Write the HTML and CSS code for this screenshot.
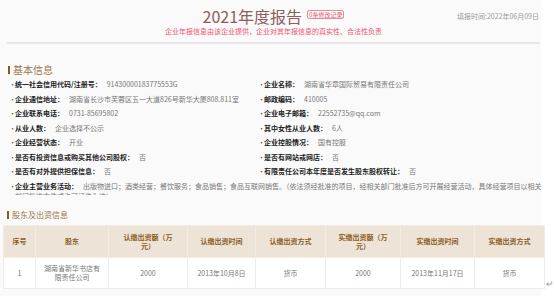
FILE: index.html
```html
<!DOCTYPE html>
<html lang="zh-CN">
<head>
<meta charset="utf-8">
<title>2021年度报告</title>
<link rel="stylesheet" href="styles.css">
</head>
<body>
<div class="page">
  <header class="head">
    <div class="head-side"></div>
    <div class="head-center">
      <div class="title-line">
        <h1 class="title">2021年度报告</h1>
        <span class="badge">0条修改记录</span>
      </div>
      <p class="notice">企业年报信息由该企业提供，企业对其年报信息的真实性、合法性负责</p>
    </div>
    <div class="head-side head-date">填报时间:2022年06月09日</div>
  </header>
  <div class="rule"></div>

  <h2 class="sec-title sec-big"><span class="sec-bar"></span>基本信息</h2>
  <div class="info">
    <div class="item"><span class="dot">·</span><b class="lbl">统一社会信用代码/注册号：</b><span class="val">91430000183775553G</span></div>
    <div class="item"><span class="dot">·</span><b class="lbl">企业名称：</b><span class="val">湖南省华章国际贸易有限责任公司</span></div>
    <div class="item"><span class="dot">·</span><b class="lbl">企业通信地址：</b><span class="val">湖南省长沙市芙蓉区五一大道826号新华大厦808.811室</span></div>
    <div class="item"><span class="dot">·</span><b class="lbl">邮政编码：</b><span class="val">410005</span></div>
    <div class="item"><span class="dot">·</span><b class="lbl">企业联系电话：</b><span class="val">0731-85695802</span></div>
    <div class="item"><span class="dot">·</span><b class="lbl">企业电子邮箱：</b><span class="val">22552735@qq.com</span></div>
    <div class="item"><span class="dot">·</span><b class="lbl">从业人数：</b><span class="val">企业选择不公示</span></div>
    <div class="item"><span class="dot">·</span><b class="lbl">其中女性从业人数：</b><span class="val">6人</span></div>
    <div class="item"><span class="dot">·</span><b class="lbl">企业经营状态：</b><span class="val">开业</span></div>
    <div class="item"><span class="dot">·</span><b class="lbl">企业控股情况：</b><span class="val">国有控股</span></div>
    <div class="item"><span class="dot">·</span><b class="lbl">是否有投资信息或购买其他公司股权：</b><span class="val">否</span></div>
    <div class="item"><span class="dot">·</span><b class="lbl">是否有网站或网店：</b><span class="val">否</span></div>
    <div class="item"><span class="dot">·</span><b class="lbl">是否有对外提供担保信息：</b><span class="val">否</span></div>
    <div class="item"><span class="dot">·</span><b class="lbl">有限责任公司本年度是否发生股东股权转让：</b><span class="val">否</span></div>
    <div class="item item-wide"><span class="dot">·</span><p class="wide-text"><b class="lbl">企业主营业务活动：</b><span class="val">出版物进口；酒类经营；餐饮服务；食品销售；食品互联网销售。（依法须经批准的项目，经相关部门批准后方可开展经营活动，具体经营项目以相关部门批准文件或许可证件为准）</span></p></div>
  </div>

  <h2 class="sec-title sec-small"><span class="sec-bar"></span>股东及出资信息</h2>
  <div class="table-row">
    <table class="grid">
      <colgroup>
        <col class="c1"><col class="c2"><col class="c3"><col class="c4">
        <col class="c5"><col class="c6"><col class="c7"><col class="c8">
      </colgroup>
      <thead>
        <tr>
          <th>序号</th><th>股东</th><th class="wrap">认缴出资额（万元）</th><th>认缴出资时间</th>
          <th>认缴出资方式</th><th class="wrap">实缴出资额（万元）</th><th>实缴出资时间</th><th>实缴出资方式</th>
        </tr>
      </thead>
      <tbody>
        <tr>
          <td>1</td><td class="name">湖南省新华书店有限责任公司</td><td>2000</td><td>2013年10月8日</td>
          <td>货币</td><td>2000</td><td>2013年11月17日</td><td>货币</td>
        </tr>
      </tbody>
    </table>
    <span class="para">↵</span>
  </div>
</div>
</body>
</html>
```

FILE: styles.css
```css
* { box-sizing: border-box; }
html, body { margin: 0; padding: 0; }
body {
  background: #ffffff;
  font-family: "Noto Sans CJK SC", "Noto Sans", sans-serif;
  color: #333;
}
.page {
  width: 554px;
  height: 296px;
  overflow: hidden;
  background: linear-gradient(to right, #fafafa 0, #fafafa 541px, #ffffff 541px);
}
.head {
  display: grid;
  grid-template-columns: 1fr auto 1fr;
  width: 554px;
  padding: 6px 15px 0 8px;
}
.head-center { text-align: center; }
.title-line {
  display: flex;
  align-items: center;
  justify-content: center;
  gap: 5px;
  height: 20px;
}
.title {
  margin: 0;
  font-size: 16px;
  font-weight: normal;
  line-height: 20px;
  color: #8e5d5d;
}
.badge {
  font-size: 6px;
  line-height: 7px;
  color: #e05a70;
  border: 1px solid #e88a99;
  border-radius: 2px;
  padding: 0 1px;
  margin-top: -3px;
}
.notice {
  margin: 0;
  font-size: 7px;
  line-height: 10px;
  color: #ee5472;
  white-space: nowrap;
}
.head-date {
  justify-self: end;
  font-size: 7px;
  line-height: 20px;
  color: #9a9a9a;
  white-space: nowrap;
}
.rule {
  height: 2px;
  background: #e8e8e8;
  margin: 6px 14px 0 7px;
}
.sec-title {
  display: flex;
  align-items: center;
  margin: 0;
  font-weight: normal;
  color: #9a7548;
  line-height: 12px;
}
.sec-big { font-size: 10px; margin-top: 20px; padding-left: 8px; }
.sec-small { font-size: 8px; margin-top: 14px; padding-left: 7px; }
.sec-bar {
  width: 2px;
  height: 8px;
  background: #8a5a22;
  margin-right: 3px;
}
.info {
  display: grid;
  grid-template-columns: 249px 290px;
  grid-auto-rows: 10px;
  row-gap: 4.57px;
  margin-top: 3px;
  padding-left: 9px;
  height: 116px;
  overflow: hidden;
  font-size: 7px;
  line-height: 10px;
}
.item {
  display: flex;
  white-space: nowrap;
}
.item-wide {
  grid-column: 1 / 3;
  grid-row: span 2;
  white-space: normal;
}
.dot {
  width: 6px;
  flex: none;
  color: #555;
}
.lbl {
  font-weight: bold;
  color: #222;
}
.val {
  color: #777;
  margin-left: 5px;
}
.wide-text {
  margin: 0;
  width: 533px;
}
.table-row {
  display: flex;
  align-items: flex-end;
  margin-top: 4px;
  padding-left: 3px;
}
.grid {
  border-collapse: collapse;
  table-layout: fixed;
  width: 541px;
  font-size: 7px;
  line-height: 9px;
  text-align: center;
}
.c1 { width: 32px; } .c2 { width: 73px; } .c3 { width: 79px; } .c4 { width: 68px; }
.c5 { width: 70px; } .c6 { width: 75px; } .c7 { width: 74px; } .c8 { width: 70px; }
.grid th {
  background: #ede3d7;
  color: #8b5e1e;
  font-weight: bold;
  height: 32px;
  padding: 0 3px;
  border: 1px solid #f2ece5;
}
.grid th.wrap { padding: 0 10px; }
.grid td {
  background: #ffffff;
  color: #777;
  height: 31px;
  padding: 0 3px;
  border: 1px solid #ececec;
}
.grid td.name { padding: 0 8px; }
.para {
  font-size: 9px;
  line-height: 9px;
  color: #999;
  margin-left: 1px;
  margin-bottom: 1px;
}
```
